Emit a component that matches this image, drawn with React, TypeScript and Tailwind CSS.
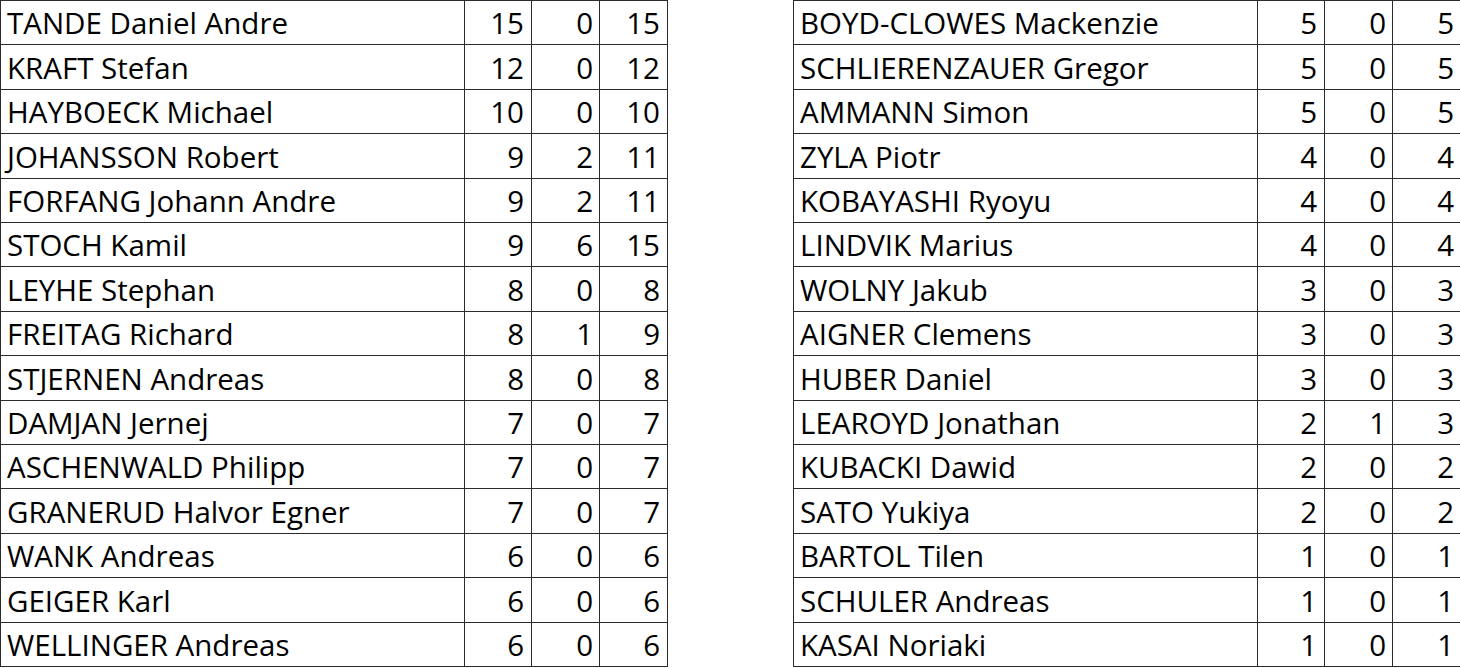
import React from 'react';

type Row = [string, number, number, number];

const leftRows: Row[] = [
  ['TANDE Daniel Andre', 15, 0, 15],
  ['KRAFT Stefan', 12, 0, 12],
  ['HAYBOECK Michael', 10, 0, 10],
  ['JOHANSSON Robert', 9, 2, 11],
  ['FORFANG Johann Andre', 9, 2, 11],
  ['STOCH Kamil', 9, 6, 15],
  ['LEYHE Stephan', 8, 0, 8],
  ['FREITAG Richard', 8, 1, 9],
  ['STJERNEN Andreas', 8, 0, 8],
  ['DAMJAN Jernej', 7, 0, 7],
  ['ASCHENWALD Philipp', 7, 0, 7],
  ['GRANERUD Halvor Egner', 7, 0, 7],
  ['WANK Andreas', 6, 0, 6],
  ['GEIGER Karl', 6, 0, 6],
  ['WELLINGER Andreas', 6, 0, 6],
];

const rightRows: Row[] = [
  ['BOYD-CLOWES Mackenzie', 5, 0, 5],
  ['SCHLIERENZAUER Gregor', 5, 0, 5],
  ['AMMANN Simon', 5, 0, 5],
  ['ZYLA Piotr', 4, 0, 4],
  ['KOBAYASHI Ryoyu', 4, 0, 4],
  ['LINDVIK Marius', 4, 0, 4],
  ['WOLNY Jakub', 3, 0, 3],
  ['AIGNER Clemens', 3, 0, 3],
  ['HUBER Daniel', 3, 0, 3],
  ['LEAROYD Jonathan', 2, 1, 3],
  ['KUBACKI Dawid', 2, 0, 2],
  ['SATO Yukiya', 2, 0, 2],
  ['BARTOL Tilen', 1, 0, 1],
  ['SCHULER Andreas', 1, 0, 1],
  ['KASAI Noriaki', 1, 0, 1],
];

const cell = 'flex items-center pt-[1px] border-r border-b border-[#2a2a2a] whitespace-nowrap';

const ScoreTable: React.FC<{ rows: Row[]; cols: string }> = ({ rows, cols }) => (
  <div className={`grid ${cols} grid-rows-[repeat(15,minmax(0,1fr))] h-[667px] border-l border-t border-[#2a2a2a]`}>
    {rows.map(([name, a, b, c]) => (
      <React.Fragment key={name}>
        <div className={`${cell} pl-[6px]`}>{name}</div>
        <div className={`${cell} justify-end pr-[7px]`}>{a}</div>
        <div className={`${cell} justify-end pr-[6px]`}>{b}</div>
        <div className={`${cell} justify-end pr-[7px]`}>{c}</div>
      </React.Fragment>
    ))}
  </div>
);

export default function App() {
  return (
    <div className="w-[1460px] h-[668px] bg-white text-black flex items-start text-[29.5px] leading-none font-['Open_Sans',sans-serif]">
      <ScoreTable rows={leftRows} cols="grid-cols-[464px_67px_68px_68px]" />
      <div className="w-[125px] shrink-0" />
      <ScoreTable rows={rightRows} cols="grid-cols-[464px_67px_68px_69px]" />
    </div>
  );
}
